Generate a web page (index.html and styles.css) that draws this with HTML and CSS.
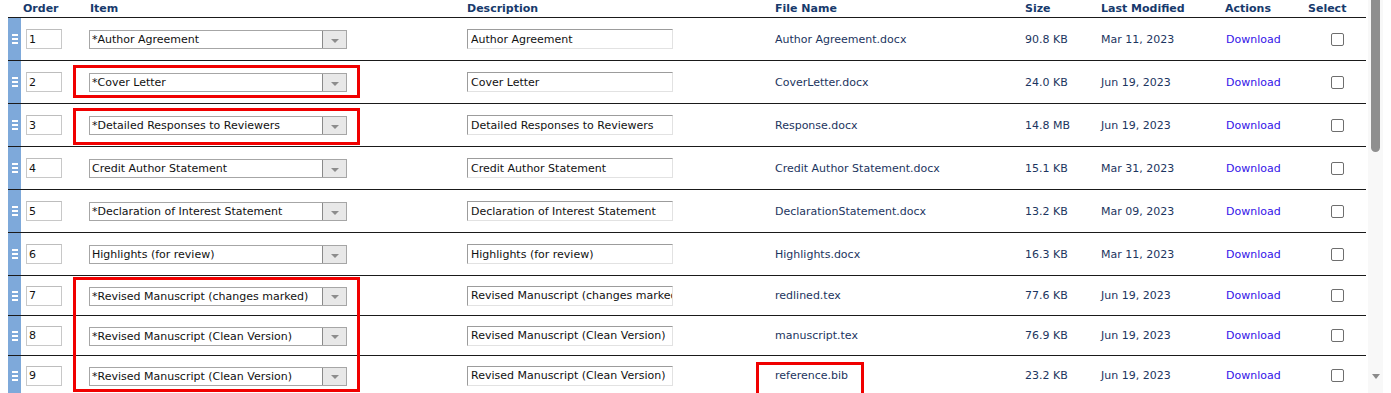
FILE: index.html
```html
<!DOCTYPE html>
<html>
<head>
<meta charset="utf-8">
<link rel="stylesheet" href="styles.css">
</head>
<body>
<div class="page">
  <div class="grid-area">
    <div class="files">
      <div class="row head">
        <div class="c handle-h"></div>
        <div class="c">Order</div>
        <div class="c c-item">Item</div>
        <div class="c">Description</div>
        <div class="c">File Name</div>
        <div class="c">Size</div>
        <div class="c">Last Modified</div>
        <div class="c c-act">Actions</div>
        <div class="c">Select</div>
      </div>

      <div class="row">
        <div class="c handle"><span class="bars"><i></i><i></i><i></i></span></div>
        <div class="c c-order"><input class="order" value="1"></div>
        <div class="c"><div class="select"><span class="sel-text">*Author Agreement</span><span class="sel-arrow"></span></div></div>
        <div class="c"><input class="desc" value="Author Agreement"></div>
        <div class="c txt">Author Agreement.docx</div>
        <div class="c txt">90.8 KB</div>
        <div class="c txt">Mar 11, 2023</div>
        <div class="c"><a class="dl" href="#">Download</a></div>
        <div class="c c-chk"><span class="chk"></span></div>
      </div>

      <div class="row">
        <div class="c handle"><span class="bars"><i></i><i></i><i></i></span></div>
        <div class="c c-order"><input class="order" value="2"></div>
        <div class="c"><div class="select"><span class="sel-text">*Cover Letter</span><span class="sel-arrow"></span></div></div>
        <div class="c"><input class="desc" value="Cover Letter"></div>
        <div class="c txt">CoverLetter.docx</div>
        <div class="c txt">24.0 KB</div>
        <div class="c txt">Jun 19, 2023</div>
        <div class="c"><a class="dl" href="#">Download</a></div>
        <div class="c c-chk"><span class="chk"></span></div>
      </div>

      <div class="row">
        <div class="c handle"><span class="bars"><i></i><i></i><i></i></span></div>
        <div class="c c-order"><input class="order" value="3"></div>
        <div class="c"><div class="select"><span class="sel-text">*Detailed Responses to Reviewers</span><span class="sel-arrow"></span></div></div>
        <div class="c"><input class="desc" value="Detailed Responses to Reviewers"></div>
        <div class="c txt">Response.docx</div>
        <div class="c txt">14.8 MB</div>
        <div class="c txt">Jun 19, 2023</div>
        <div class="c"><a class="dl" href="#">Download</a></div>
        <div class="c c-chk"><span class="chk"></span></div>
      </div>

      <div class="row">
        <div class="c handle"><span class="bars"><i></i><i></i><i></i></span></div>
        <div class="c c-order"><input class="order" value="4"></div>
        <div class="c"><div class="select"><span class="sel-text">Credit Author Statement</span><span class="sel-arrow"></span></div></div>
        <div class="c"><input class="desc" value="Credit Author Statement"></div>
        <div class="c txt">Credit Author Statement.docx</div>
        <div class="c txt">15.1 KB</div>
        <div class="c txt">Mar 31, 2023</div>
        <div class="c"><a class="dl" href="#">Download</a></div>
        <div class="c c-chk"><span class="chk"></span></div>
      </div>

      <div class="row">
        <div class="c handle"><span class="bars"><i></i><i></i><i></i></span></div>
        <div class="c c-order"><input class="order" value="5"></div>
        <div class="c"><div class="select"><span class="sel-text">*Declaration of Interest Statement</span><span class="sel-arrow"></span></div></div>
        <div class="c"><input class="desc" value="Declaration of Interest Statement"></div>
        <div class="c txt">DeclarationStatement.docx</div>
        <div class="c txt">13.2 KB</div>
        <div class="c txt">Mar 09, 2023</div>
        <div class="c"><a class="dl" href="#">Download</a></div>
        <div class="c c-chk"><span class="chk"></span></div>
      </div>

      <div class="row">
        <div class="c handle"><span class="bars"><i></i><i></i><i></i></span></div>
        <div class="c c-order"><input class="order" value="6"></div>
        <div class="c"><div class="select"><span class="sel-text">Highlights (for review)</span><span class="sel-arrow"></span></div></div>
        <div class="c"><input class="desc" value="Highlights (for review)"></div>
        <div class="c txt">Highlights.docx</div>
        <div class="c txt">16.3 KB</div>
        <div class="c txt">Mar 11, 2023</div>
        <div class="c"><a class="dl" href="#">Download</a></div>
        <div class="c c-chk"><span class="chk"></span></div>
      </div>

      <div class="row short">
        <div class="c handle"><span class="bars"><i></i><i></i><i></i></span></div>
        <div class="c c-order"><input class="order" value="7"></div>
        <div class="c"><div class="select"><span class="sel-text">*Revised Manuscript (changes marked)</span><span class="sel-arrow"></span></div></div>
        <div class="c"><input class="desc" value="Revised Manuscript (changes marked)"></div>
        <div class="c txt">redlined.tex</div>
        <div class="c txt">77.6 KB</div>
        <div class="c txt">Jun 19, 2023</div>
        <div class="c"><a class="dl" href="#">Download</a></div>
        <div class="c c-chk"><span class="chk"></span></div>
      </div>

      <div class="row short">
        <div class="c handle"><span class="bars"><i></i><i></i><i></i></span></div>
        <div class="c c-order"><input class="order" value="8"></div>
        <div class="c"><div class="select"><span class="sel-text">*Revised Manuscript (Clean Version)</span><span class="sel-arrow"></span></div></div>
        <div class="c"><input class="desc" value="Revised Manuscript (Clean Version)"></div>
        <div class="c txt">manuscript.tex</div>
        <div class="c txt">76.9 KB</div>
        <div class="c txt">Jun 19, 2023</div>
        <div class="c"><a class="dl" href="#">Download</a></div>
        <div class="c c-chk"><span class="chk"></span></div>
      </div>

      <div class="row short">
        <div class="c handle"><span class="bars"><i></i><i></i><i></i></span></div>
        <div class="c c-order"><input class="order" value="9"></div>
        <div class="c"><div class="select"><span class="sel-text">*Revised Manuscript (Clean Version)</span><span class="sel-arrow"></span></div></div>
        <div class="c"><input class="desc" value="Revised Manuscript (Clean Version)"></div>
        <div class="c txt">reference.bib</div>
        <div class="c txt">23.2 KB</div>
        <div class="c txt">Jun 19, 2023</div>
        <div class="c"><a class="dl" href="#">Download</a></div>
        <div class="c c-chk"><span class="chk"></span></div>
      </div>
    </div>

    <div class="mark mark-2"></div>
    <div class="mark mark-3"></div>
    <div class="mark mark-789"></div>
    <div class="mark mark-bib"></div>
  </div>

  <div class="scrollbar">
    <div class="thumb"></div>
    <div class="track-fill"></div>
    <div class="arrow-down"></div>
  </div>
</div>
</body>
</html>
```

FILE: styles.css
```css
* { box-sizing: border-box; }
html, body { margin: 0; padding: 0; background: #fff; }
body {
  font-family: "DejaVu Sans", Verdana, sans-serif;
  font-size: 11px;
  color: #111;
}
.page {
  display: flex;
  height: 393px;
  overflow: hidden;
  padding-left: 8px;
}
.grid-area {
  position: relative;
  width: 1360px;
}
.files {
  width: 1358px;
}
.row {
  display: grid;
  grid-template-columns: 13px 66px 378px 308px 250px 76px 125px 82px 60px;
  align-items: center;
  height: 43px;
  border-bottom: 1px solid #1a1a1a;
}
.row.short { height: 40px; }
.row.head {
  height: 18px;
  font-weight: bold;
  color: #173a6c;
  align-items: center;
}
.c {
  padding-left: 2px;
  white-space: nowrap;
  overflow: hidden;
}
.head .c-item { padding-left: 3px; }
.head .c-act { padding-left: 1px; }
.handle {
  align-self: stretch;
  background: #7ea9da;
  padding: 0;
  display: flex;
  align-items: center;
  justify-content: center;
}
.handle-h { padding: 0; }
.bars {
  display: flex;
  flex-direction: column;
  gap: 2px;
  margin-left: 0;
}
.bars i {
  display: block;
  width: 6px;
  height: 2px;
  background: #fff;
}
.c-order { padding-left: 5px; }
.order {
  width: 36px;
  height: 20px;
  border: 1px solid #c8c8c8;
  border-top-color: #bdbdbd;
  font: inherit;
  color: #111;
  padding: 0 0 0 2px;
  margin: 0;
  outline: none;
}
.select {
  display: flex;
  width: 258px;
  height: 19px;
  margin-top: 1px;
  border: 1px solid #a6a6a6;
  background: #fff;
}
.sel-text {
  flex: 1;
  padding-left: 2px;
  line-height: 17px;
  overflow: hidden;
}
.sel-arrow {
  width: 24px;
  background: #e8e8e8;
  border-left: 1px solid #8a8a8a;
  display: flex;
  align-items: center;
  justify-content: center;
}
.sel-arrow::after {
  content: "";
  border-left: 4px solid transparent;
  border-right: 4px solid transparent;
  border-top: 4px solid #8c8c8c;
  margin-top: 2px;
}
.desc {
  width: 206px;
  height: 20px;
  border: 1px solid #e2e2e2;
  border-top-color: #9c9c9c;
  border-left-color: #9c9c9c;
  font: inherit;
  color: #111;
  padding: 0 0 0 3px;
  margin: 0;
  outline: none;
}
.txt { color: #1c3560; }
.dl {
  color: #3313e8;
  text-decoration: none;
}
.c-chk { padding-left: 25px; display: flex; }
.chk {
  display: block;
  width: 13px;
  height: 13px;
  border: 1px solid #6e6e6e;
  border-radius: 2px;
  background: #fff;
}

.mark {
  position: absolute;
  border: 3px solid #f00000;
}
.mark-2 { left: 65px; top: 65px; width: 287px; height: 33px; }
.mark-3 { left: 65px; top: 108px; width: 287px; height: 37px; }
.mark-789 { left: 65px; top: 277px; width: 287px; height: 115px; }
.mark-bib { left: 748px; top: 362px; width: 108px; height: 40px; }

.scrollbar {
  width: 15px;
  margin-left: 0;
  background: #f8f8f8;
  display: flex;
  flex-direction: column;
  align-items: center;
  padding-bottom: 14px;
}
.thumb {
  width: 9px;
  height: 152px;
  background: #8f8f8f;
  border-radius: 0 0 5px 5px;
}
.track-fill { flex: 1; }
.arrow-down {
  border-left: 4px solid transparent;
  border-right: 4px solid transparent;
  border-top: 5px solid #8a8a8a;
}
```
